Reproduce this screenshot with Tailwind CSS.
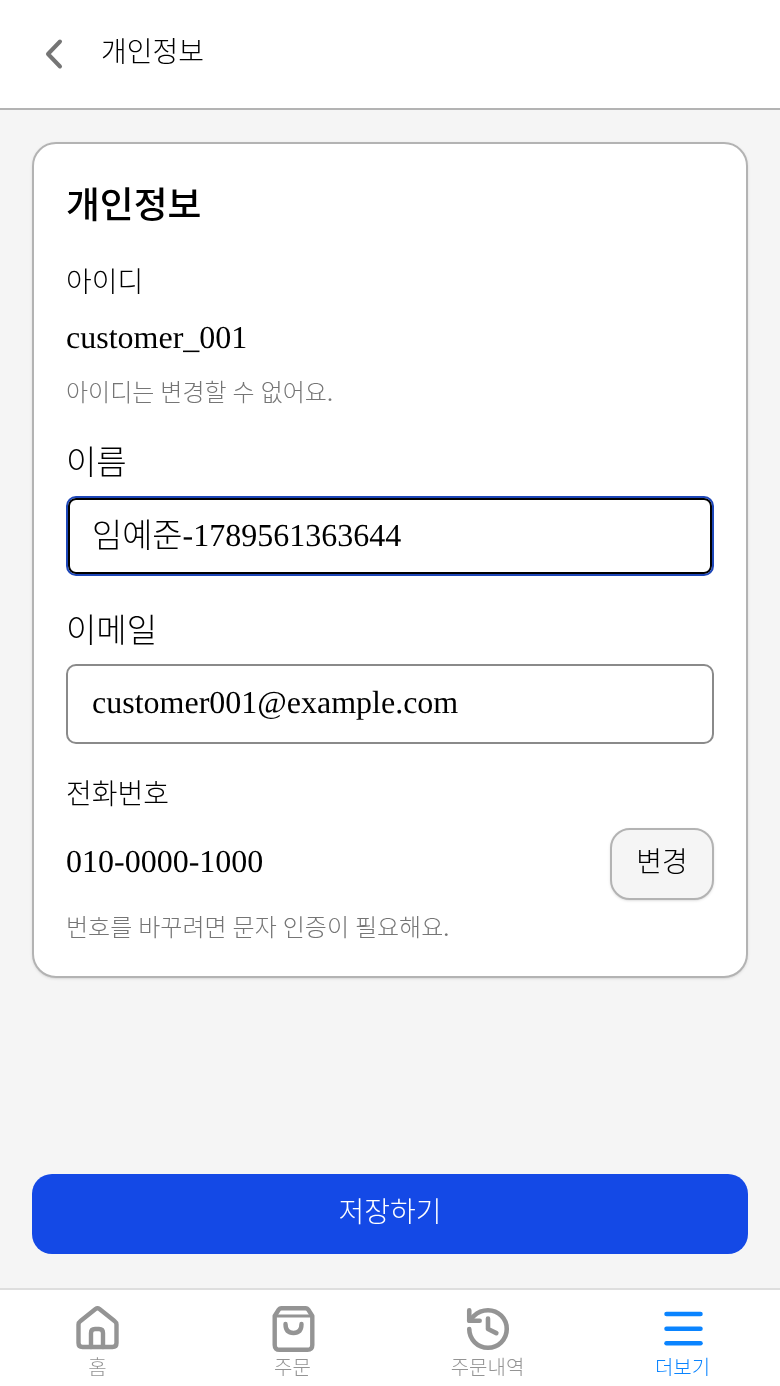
<!DOCTYPE html>
<html lang="ko">
<head>
  <meta charset="UTF-8" />
  <meta name="viewport" content="width=device-width, initial-scale=1.0" />
  <title>개인정보</title>
  <script src="https://cdn.jsdelivr.net/npm/@tailwindcss/browser@4"></script>
</head>
<body class="bg-[#f5f5f5] text-black font-light font-['Liberation_Serif','Noto_Sans_CJK_KR',serif]">
  <div class="h-[1386px] w-[780px] flex flex-col overflow-hidden [will-change:transform]">
    <!-- header -->
    <header class="h-[110px] shrink-0 bg-white border-b-2 border-[#b3b3b3] flex items-start pl-[40px]">
      <svg class="mt-[38px] w-[28px] h-[32px]" viewBox="0 0 28 32" fill="none" stroke="#757575" stroke-width="4" stroke-linecap="round" stroke-linejoin="round">
        <path d="M20 3.5 L8 16 L20 28.5" />
      </svg>
      <h1 class="ml-[33px] mt-[33px] text-[28px] leading-[40px]">개인정보</h1>
    </header>

    <main class="flex-1 px-[32px] pt-[32px] flex flex-col">
      <section class="h-[836px] bg-white border-2 border-[#b3b3b3] rounded-[24px] shadow-sm px-[32px] pt-[34px]">
        <h2 class="text-[36.8px] leading-[56px] font-medium">개인정보</h2>
        <p class="mt-[29px] text-[28px] leading-[40px]">아이디</p>
        <p class="mt-[14px] text-[32px] leading-[40px] [text-rendering:geometricPrecision]">customer_001</p>
        <p class="mt-[18px] text-[24px] leading-[36px] text-[#757575]">아이디는 변경할 수 없어요.</p>

        <label class="block mt-[28px] text-[33px] leading-[48px]">이름</label>
        <div class="mt-[9px] h-[80px] rounded-[10px] border-2 border-[#1d46b8] shadow-[inset_0_0_0_2px_#000] pl-[24px] pb-[2px] flex items-center text-[32px]"><span class="text-[32.8px] pt-[4px]">임예준</span><span class="[text-rendering:geometricPrecision]">-1789561363644</span></div>

        <label class="block mt-[31px] text-[33px] leading-[48px]">이메일</label>
        <div class="mt-[9px] h-[80px] rounded-[10px] border-2 border-[#8a8a8a] pl-[24px] pb-[4px] flex items-center text-[32px] [text-rendering:geometricPrecision]">customer001@example.com</div>

        <p class="mt-[31px] text-[28px] leading-[40px]">전화번호</p>
        <div class="mt-[13px] flex items-center justify-between">
          <span class="text-[32px] pb-[6px] [text-rendering:geometricPrecision]">010-0000-1000</span>
          <button class="w-[104px] h-[72px] bg-[#f5f5f5] border-2 border-[#b3b3b3] rounded-[20px] shadow-sm text-[28px] pb-[2px]">변경</button>
        </div>
        <p class="mt-[10px] text-[24px] leading-[36px] text-[#757575]">번호를 바꾸려면 문자 인증이 필요해요.</p>
      </section>

      <button class="mt-auto mb-[34px] h-[80px] shrink-0 rounded-[20px] bg-[#1449e6] text-white text-[28px] pb-[2px]">저장하기</button>
    </main>

    <!-- bottom nav -->
    <nav class="h-[98px] shrink-0 bg-white border-t-2 border-[#dedede] grid grid-cols-4 text-[20px] text-[#949494]">
      <a class="flex flex-col items-center">
        <svg class="mt-[14px] w-[48px] h-[48px]" viewBox="0 0 48 48" fill="none" stroke="#949494" stroke-width="4.4" stroke-linejoin="round" stroke-linecap="round">
          <path d="M4.500 20.500 Q4.500 18.500 6.500 17 L21.500 5 Q23.500 3.500 25.500 5 L40.500 17 Q42.500 18.500 42.500 20.500 V39 Q42.500 43 38.500 43 H8.500 Q4.500 43 4.500 39 Z" />
          <path d="M17 43 V29 Q17 25 21 25 H25 Q29 25 29 29 V43" />
        </svg>
        <span class="h-[24px] leading-[32px] overflow-hidden">홈</span>
      </a>
      <a class="flex flex-col items-center">
        <svg class="mt-[14px] w-[48px] h-[48px]" viewBox="0 0 48 48" fill="none" stroke="#949494" stroke-width="4.4" stroke-linejoin="round" stroke-linecap="round">
          <path d="M5.700 12 L9.500 6 Q10.500 4.200 12.500 4.200 H36.500 Q38.500 4.200 39.500 6 L43.300 12 V41 Q43.300 45.800 38.500 45.800 H10.500 Q5.700 45.800 5.700 41 Z" />
          <path d="M5.700 12 H43.300" stroke-width="3" />
          <path d="M16.500 20 Q16.500 29 24.500 29 Q32.500 29 32.500 20" />
        </svg>
        <span class="h-[24px] leading-[32px] overflow-hidden">주문</span>
      </a>
      <a class="flex flex-col items-center">
        <svg class="mt-[14px] -mb-[2px] w-[50px] h-[50px]" viewBox="0 0 24 24" fill="none" stroke="#949494" stroke-width="2.2" stroke-linejoin="round" stroke-linecap="round">
          <path d="M3 12a9 9 0 1 0 9-9 9.750 9.750 0 0 0-6.740 2.740L3 8" />
          <path d="M3 3v5h5" />
          <path d="M12 7v5l4 2" />
        </svg>
        <span class="h-[24px] leading-[32px] overflow-hidden">주문내역</span>
      </a>
      <a class="flex flex-col items-center text-[#0a84ff]">
        <svg class="mt-[14px] w-[48px] h-[48px]" viewBox="0 0 48 48" fill="none" stroke="#0a84ff" stroke-width="4.500" stroke-linecap="round">
          <path d="M7.500 10 H41.500" />
          <path d="M7.500 24.700 H41.500" />
          <path d="M7.500 39.300 H41.500" />
        </svg>
        <span class="h-[24px] leading-[32px] overflow-hidden">더보기</span>
      </a>
    </nav>
  </div>
</body>
</html>
